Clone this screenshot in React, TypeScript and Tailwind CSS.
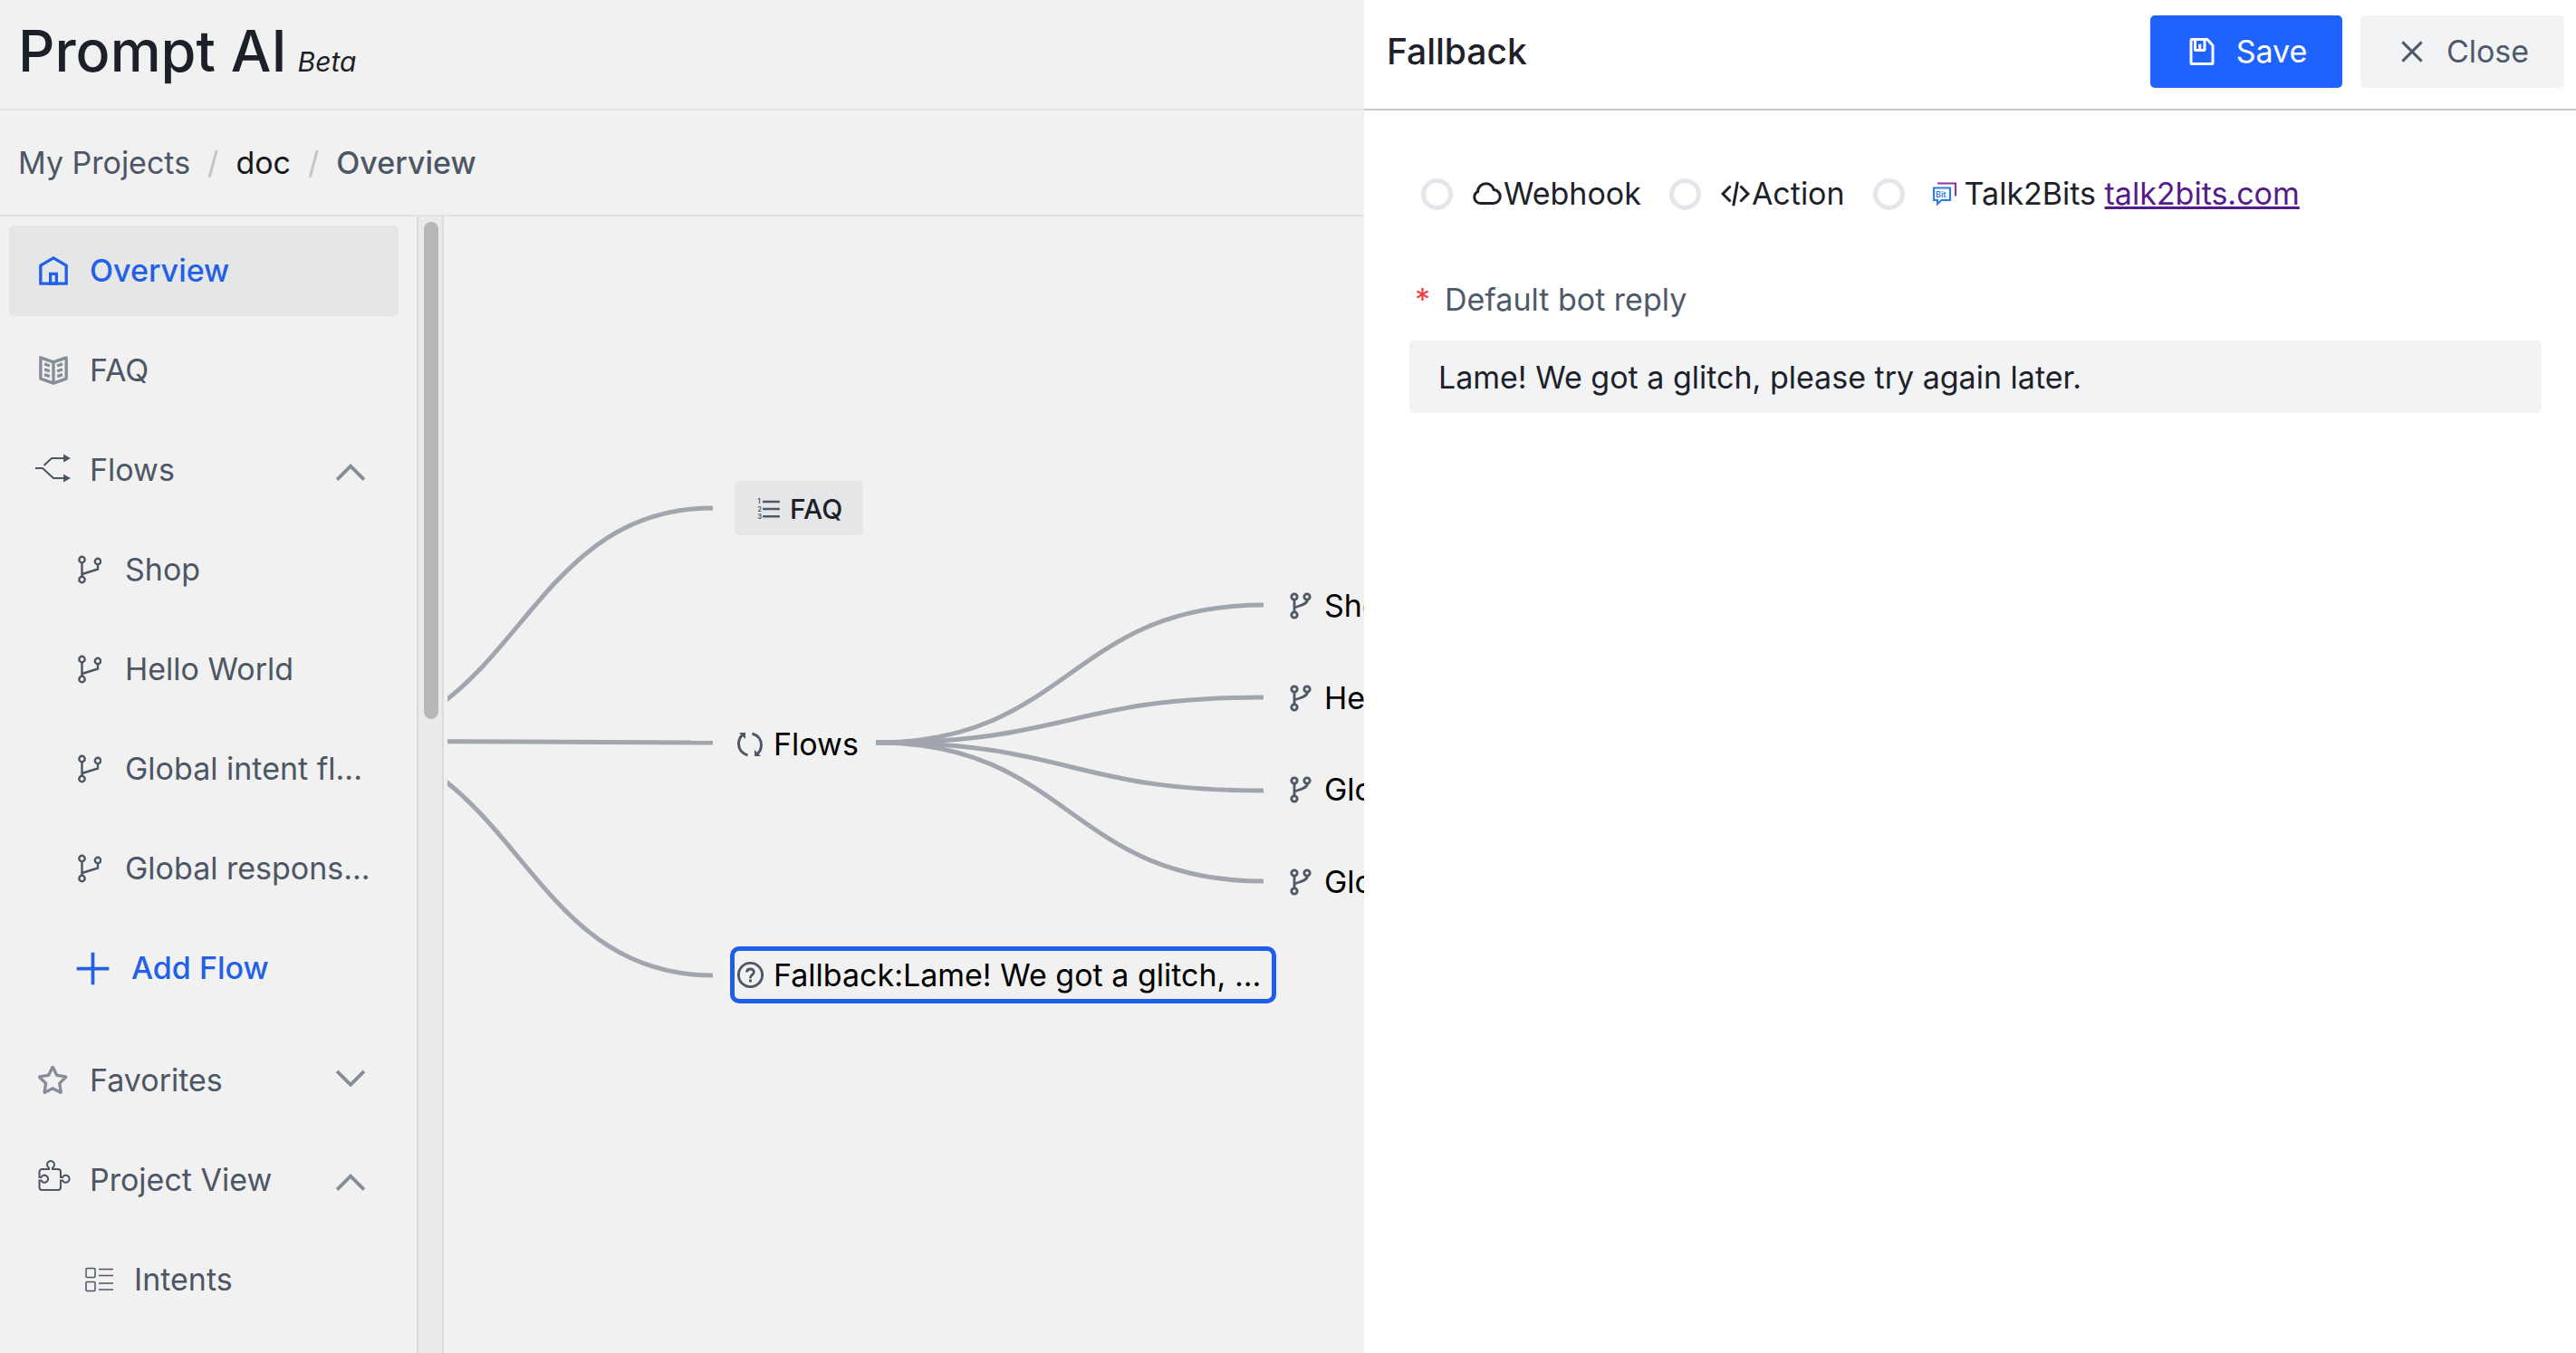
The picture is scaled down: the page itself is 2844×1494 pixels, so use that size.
import React from "react";

type IconProps = { className?: string };

function Stroke({ className, width = 4, children }: IconProps & { width?: number; children: React.ReactNode }) {
  return (
    <svg viewBox="0 0 48 48" fill="none" stroke="currentColor" strokeWidth={width} className={className} aria-hidden="true">
      {children}
    </svg>
  );
}

const HomeIcon = ({ className }: IconProps) => (
  <Stroke className={className}><path d="M7 17 24 7l17 10v24H7V17Z" /><path d="M20 28h8v13h-8V28Z" /></Stroke>
);
const BookIcon = ({ className }: IconProps) => (
  <Stroke className={className}>
    <path strokeLinejoin="round" d="M24 13 7 7v28l17 6 17-6V7l-17 6Z" />
    <path d="M24 13v27.5M29 18l7-2.5M29 25l7-2.5M29 32l7-2.5M19 18l-7-2.5M19 25l-7-2.5M19 32l-7-2.5" />
  </Stroke>
);
const StarIcon = ({ className }: IconProps) => (
  <Stroke className={className}>
    <path d="M22.552 6.908a.5.5 0 0 1 .896 0l5.02 10.17a.5.5 0 0 0 .376.274l11.224 1.631a.5.5 0 0 1 .277.853l-8.122 7.916a.5.5 0 0 0-.143.443l1.917 11.178a.5.5 0 0 1-.726.527l-10.038-5.278a.5.5 0 0 0-.466 0L12.73 39.9a.5.5 0 0 1-.726-.527l1.918-11.178a.5.5 0 0 0-.144-.443l-8.122-7.916a.5.5 0 0 1 .278-.853l11.223-1.63a.5.5 0 0 0 .376-.274l5.02-10.17Z" />
  </Stroke>
);
const PlusIcon = ({ className }: IconProps) => (
  <Stroke className={className}><path d="M5 24h38M24 5v38" /></Stroke>
);
const UpIcon = ({ className }: IconProps) => (
  <Stroke className={className}><path d="M39.6 35 24.043 19.443 8.487 35" /></Stroke>
);
const DownIcon = ({ className }: IconProps) => (
  <Stroke className={className}><path d="M39.6 13.443 24.043 29 8.487 13.443" /></Stroke>
);
const CloseIcon = ({ className }: IconProps) => (
  <Stroke className={className}><path d="M9.857 9.858 38.142 38.142M38.142 9.858 9.857 38.142" /></Stroke>
);
const SaveIcon = ({ className }: IconProps) => (
  <Stroke className={className}>
    <path d="M21 13v9M39 42H9a1 1 0 0 1-1-1V7a1 1 0 0 1 1-1h22.55a1 1 0 0 1 .748.336l7.45 8.38a1 1 0 0 1 .252.664V41a1 1 0 0 1-1 1ZM14 6h14v15a1 1 0 0 1-1 1H15a1 1 0 0 1-1-1V6Z" />
  </Stroke>
);
const CloudIcon = ({ className }: IconProps) => (
  <Stroke className={className}>
    <path d="M5 29a9 9 0 0 0 9 9h19c5.523 0 10-4.477 10-10 0-5.312-4.142-9.657-9.373-9.98C32.3 12.833 27.598 9 22 9c-6.606 0-11.965 5.338-12 11.935A9 9 0 0 0 5 29Z" />
  </Stroke>
);
const CodeIcon = ({ className }: IconProps) => (
  <Stroke className={className}>
    <path d="M16.734 12.686 5.42 24l11.314 11.314m14.521-22.628L42.57 24 31.255 35.314M27.2 6.28l-6.251 35.453" />
  </Stroke>
);
const QuestionIcon = ({ className }: IconProps) => (
  <Stroke className={className}>
    <circle cx="24" cy="24" r="18" />
    <path d="M24.006 31v4.008m0-6.008L24 28c0-3 3-4 4.78-6.402C30.558 19.195 28.288 15 23.987 15c-4.014 0-5.382 2.548-5.388 4.514v.465" />
  </Stroke>
);
const OrderedListIcon = ({ className }: IconProps) => (
  <Stroke className={className}>
    <path d="M13 24h30M13 11h30M13 37h30" />
    <g fill="currentColor" stroke="none" className="text-[11px] font-bold">
      <text x="4" y="15">1</text>
      <text x="4" y="28">2</text>
      <text x="4" y="41">3</text>
    </g>
  </Stroke>
);
const LoopIcon = ({ className }: IconProps) => (
  <svg viewBox="0 0 30 30" fill="none" stroke="currentColor" strokeWidth="3" className={className} aria-hidden="true">
    <path d="M12.500 27C6 25 2.500 20 2.500 14.500 2.500 10 4.500 6 8 3.500M17.500 3C24 5 27.500 10 27.500 15.500 27.500 20 25.500 24 22 26.500" />
    <path fill="currentColor" stroke="none" d="M3 2h7v7zM27 28h-7v-7z" />
  </svg>
);
const FlowsIcon = ({ className }: IconProps) => (
  <svg viewBox="0 0 40 32" fill="none" stroke="currentColor" strokeWidth="2" className={className} aria-hidden="true">
    <path d="M0 16h8l12 11h12M9.500 13 18 5h14" />
    <path fill="currentColor" stroke="none" d="M31 0.500 39 5l-8 4.500zM31 22.500 39 27l-8 4.500z" />
  </svg>
);
const BranchIcon = ({ className }: IconProps) => (
  <svg viewBox="0 0 26 32" fill="none" stroke="currentColor" strokeWidth="2.400" className={className} aria-hidden="true">
    <circle cx="4.500" cy="5" r="3.200" /><circle cx="22" cy="7" r="3.200" /><circle cx="4.500" cy="27" r="3.200" />
    <path d="M4.500 8v16M22 10v5.500L4.500 21" />
  </svg>
);
const MergeIcon = ({ className }: IconProps) => (
  <svg viewBox="0 0 24 30" fill="none" stroke="currentColor" strokeWidth="2.800" className={className} aria-hidden="true">
    <circle cx="5" cy="5" r="3.200" /><circle cx="19" cy="5" r="3.200" /><circle cx="5" cy="25" r="3.200" />
    <path d="M5 8v14M19.500 8c0 7-14.500 7-14.500 10" />
  </svg>
);
const PuzzleIcon = ({ className }: IconProps) => (
  <svg viewBox="0 0 36 36" fill="none" stroke="currentColor" strokeWidth="2" className={className} aria-hidden="true">
    <path d="M4.500 10H12V8.500A4 4 0 1 1 16 8.500V10H22a3 3 0 0 1 3 3V19H27A4 4 0 1 1 27 22.500H25V30a3 3 0 0 1-3 3H4.500a3 3 0 0 1-3-3V22.500H3.500A4 4 0 1 0 3.500 19H1.500V13a3 3 0 0 1 3-3Z" />
  </svg>
);
const IntentsIcon = ({ className }: IconProps) => (
  <svg viewBox="0 0 32 28" fill="none" stroke="currentColor" strokeWidth="1.500" className={className} aria-hidden="true">
    <rect x="1" y="1.500" width="10" height="10" rx="1" /><rect x="1" y="16.500" width="10" height="10" rx="1" />
    <path d="M15 2.500h16M15 9.500h16M15 18h16M15 25h16" />
  </svg>
);
const BitsIcon = ({ className }: IconProps) => (
  <svg viewBox="0 0 28 28" fill="none" className={className} aria-hidden="true">
    <path stroke="#8a35a0" strokeWidth="2.200" d="M6 2.500h20v14" />
    <path stroke="#2a7de1" strokeWidth="2.200" d="M2 7.500h18v13.500H10.500l-4.500 4v-4H2Z" />
    <text x="4" y="17.500" fill="#2a7de1" className="text-[9px] font-semibold">Bit</text>
  </svg>
);

const row = "flex h-[100px] w-full items-center rounded-[5px] pr-[30px] text-left";

function NavItem({ icon, label, active, chevron }: { icon: React.ReactNode; label: string; active?: boolean; chevron?: "up" | "down" }) {
  return (
    <button type="button" className={active ? `${row} bg-[#e5e6e8] font-medium text-[#2260e6]` : row}>
      <span className="ml-[29px] flex w-[60px] shrink-0 items-center">{icon}</span>
      <span className="flex-1">{label}</span>
      {chevron === "up" && <UpIcon className="size-[46px] text-[#868d97]" />}
      {chevron === "down" && <DownIcon className="size-[46px] text-[#868d97]" />}
    </button>
  );
}

function SubItem({ icon, label }: { icon: React.ReactNode; label: string }) {
  return (
    <button type="button" className="flex h-[100px] w-full items-center gap-[26px] rounded-[5px] pl-[76px] text-left whitespace-nowrap">
      {icon}
      {label}
    </button>
  );
}

const ROOT = { x: -135, y: 579 };
const HUB = { x: 473, y: 581 };
const edges = [
  { from: ROOT, to: { x: 293, y: 322 } },
  { from: ROOT, to: { x: 293, y: 581 } },
  { from: ROOT, to: { x: 293, y: 838 } },
  { from: HUB, to: { x: 901, y: 429 } },
  { from: HUB, to: { x: 901, y: 531 } },
  { from: HUB, to: { x: 901, y: 634 } },
  { from: HUB, to: { x: 901, y: 734 } },
];

function FlowNode({ label, className }: { label: string; className: string }) {
  return (
    <div className={`absolute left-[930px] flex h-[60px] items-center gap-[14px] whitespace-nowrap ${className}`}>
      <MergeIcon className="h-[30px] w-6 text-[#4f5866]" />
      {label}
    </div>
  );
}

function Canvas() {
  return (
    <main className="relative ml-1 min-w-0 flex-1 overflow-hidden text-black">
      <svg className="absolute inset-0 size-full" fill="none" stroke="#a1a5ae" strokeWidth="5" aria-hidden="true">
        {edges.map(({ from, to }, i) => {
          const mid = (from.x + to.x) / 2;
          return <path key={i} d={`M${from.x} ${from.y}C${mid} ${from.y} ${mid} ${to.y} ${to.x} ${to.y}`} />;
        })}
      </svg>
      <div className="absolute top-[292px] left-[317px] flex h-[60px] w-[142px] items-center gap-2 rounded-[5px] bg-[#e5e6e8] pt-[2px] pl-[23px] text-[30px] font-medium text-[#1c2028]">
        <OrderedListIcon className="size-[30px] text-[#4f5866]" />
        FAQ
      </div>
      <div className="absolute top-[553px] left-[319px] flex h-[60px] items-center gap-[11px]">
        <LoopIcon className="size-[30px] text-[#4f5866]" />
        Flows
      </div>
      <div className="absolute top-[806px] left-[312px] flex h-[63px] w-[603px] items-center gap-2 rounded-[10px] border-[5px] border-[#1f5eea] whitespace-nowrap">
        <QuestionIcon className="size-[35px] shrink-0 text-[#4f5866]" />
        Fallback:Lame! We got a glitch, ...
      </div>
      <FlowNode label="Shop" className="top-[400px]" />
      <FlowNode label="Hello World" className="top-[502px]" />
      <FlowNode label="Global intent flow" className="top-[603px]" />
      <FlowNode label="Global response flow" className="top-[705px]" />
    </main>
  );
}

function Choice({ children }: { children: React.ReactNode }) {
  return (
    <label className="flex items-center">
      <input type="radio" name="source" className="mr-5 size-[35px] appearance-none rounded-full border-[5px] border-[#e5e6eb] checked:border-[#1f63ff]" />
      {children}
    </label>
  );
}

function Drawer() {
  return (
    <aside className="absolute inset-y-0 right-0 w-[47.05%] bg-white text-[#1d2129]">
      <header className="flex h-[122px] items-center border-b-2 border-[#c9c9c9] pr-[13px] pb-[6px] pl-[25px]">
        <h2 className="flex-1 text-[39px] font-medium">Fallback</h2>
        <button type="button" className="mr-5 flex h-20 w-[212px] items-center justify-center gap-5 rounded-[5px] bg-[#1f63ff] text-white">
          <SaveIcon className="size-9" />
          Save
        </button>
        <button type="button" className="flex h-20 w-[225px] items-center justify-center gap-5 rounded-[5px] bg-[#f2f3f5] text-[#4e5969]">
          <CloseIcon className="size-9" />
          Close
        </button>
      </header>
      <form className="pt-[67px] pr-[38px] pl-[50px]">
        <div className="flex h-[50px] items-center gap-[31px] pl-[13px]">
          <Choice><CloudIcon className="size-9" />Webhook</Choice>
          <Choice><CodeIcon className="size-9" />Action</Choice>
          <Choice>
            <BitsIcon className="mr-2 ml-[10px] size-7" />
            Talk2Bits&nbsp;<a href="#talk2bits" className="text-[#551a8b] underline">talk2bits.com</a>
          </Choice>
        </div>
        <label htmlFor="reply" className="mt-[67px] flex h-[50px] items-center pl-[6px] text-[#4e5969]">
          <span className="mr-4 text-[#f53f3f]">*</span>
          Default bot reply
        </label>
        <input id="reply" type="text" defaultValue="Lame! We got a glitch, please try again later." className="mt-5 block h-20 w-full rounded-[5px] bg-[#f2f3f5] px-8 outline-none" />
      </form>
    </aside>
  );
}

export default function App() {
  const branch = <BranchIcon className="h-8 w-[26px] shrink-0" />;
  return (
    <div className="relative flex h-screen flex-col overflow-hidden bg-[#f1f1f1] font-['Inter',sans-serif] text-[34px] leading-[50px] text-[#4d5664]">
      <header className="flex h-[122px] shrink-0 items-baseline gap-3 border-b-2 border-[#e3e4e6] pt-4 pl-5 text-[#1c2129]">
        <h1 className="text-[63px] leading-[80px] font-medium">Prompt AI</h1>
        <em className="text-[30px]">Beta</em>
      </header>
      <nav aria-label="Breadcrumb" className="flex h-[117px] shrink-0 items-center border-b-2 border-[#e0e1e4] pl-5">
        <a href="#projects">My Projects</a>
        <span className="mx-[19px] text-[#bfc4ca]">/</span>
        <a href="#doc" className="text-[#16181c]">doc</a>
        <span className="mx-[19px] text-[#bfc4ca]">/</span>
        <span className="font-medium">Overview</span>
      </nav>
      <div className="flex min-h-0 flex-1">
        <aside className="flex w-[490px] shrink-0 overflow-hidden">
          <div className="flex w-[460px] shrink-0 flex-col gap-[10px] pt-[10px] pr-5 pl-[10px]">
            <NavItem active label="Overview" icon={<HomeIcon className="size-10" />} />
            <NavItem label="FAQ" icon={<BookIcon className="size-10 text-[#868d97]" />} />
            <NavItem label="Flows" chevron="up" icon={<FlowsIcon className="mb-1 h-8 w-10" />} />
            <SubItem label="Shop" icon={branch} />
            <SubItem label="Hello World" icon={branch} />
            <SubItem label="Global intent fl..." icon={branch} />
            <SubItem label="Global respons..." icon={branch} />
            <button type="button" className="mb-[14px] flex h-[100px] items-center gap-5 pl-[70px] font-medium text-[#2260e6]">
              <PlusIcon className="size-[45px]" />
              Add Flow
            </button>
            <NavItem label="Favorites" chevron="down" icon={<StarIcon className="size-10 text-[#868d97]" />} />
            <NavItem label="Project View" chevron="up" icon={<PuzzleIcon className="mb-2 ml-[3px] size-9" />} />
            <SubItem label="Intents" icon={<IntentsIcon className="-mr-1 ml-2 h-7 w-8" />} />
          </div>
          <div className="flex flex-1 justify-center border-x-2 border-[#dbdbdb] bg-[#ebebeb] pt-[6px] pl-[2px]">
            <div className="h-[549px] w-4 rounded-full bg-[#b8b8b8]" />
          </div>
        </aside>
        <Canvas />
      </div>
      <Drawer />
    </div>
  );
}
